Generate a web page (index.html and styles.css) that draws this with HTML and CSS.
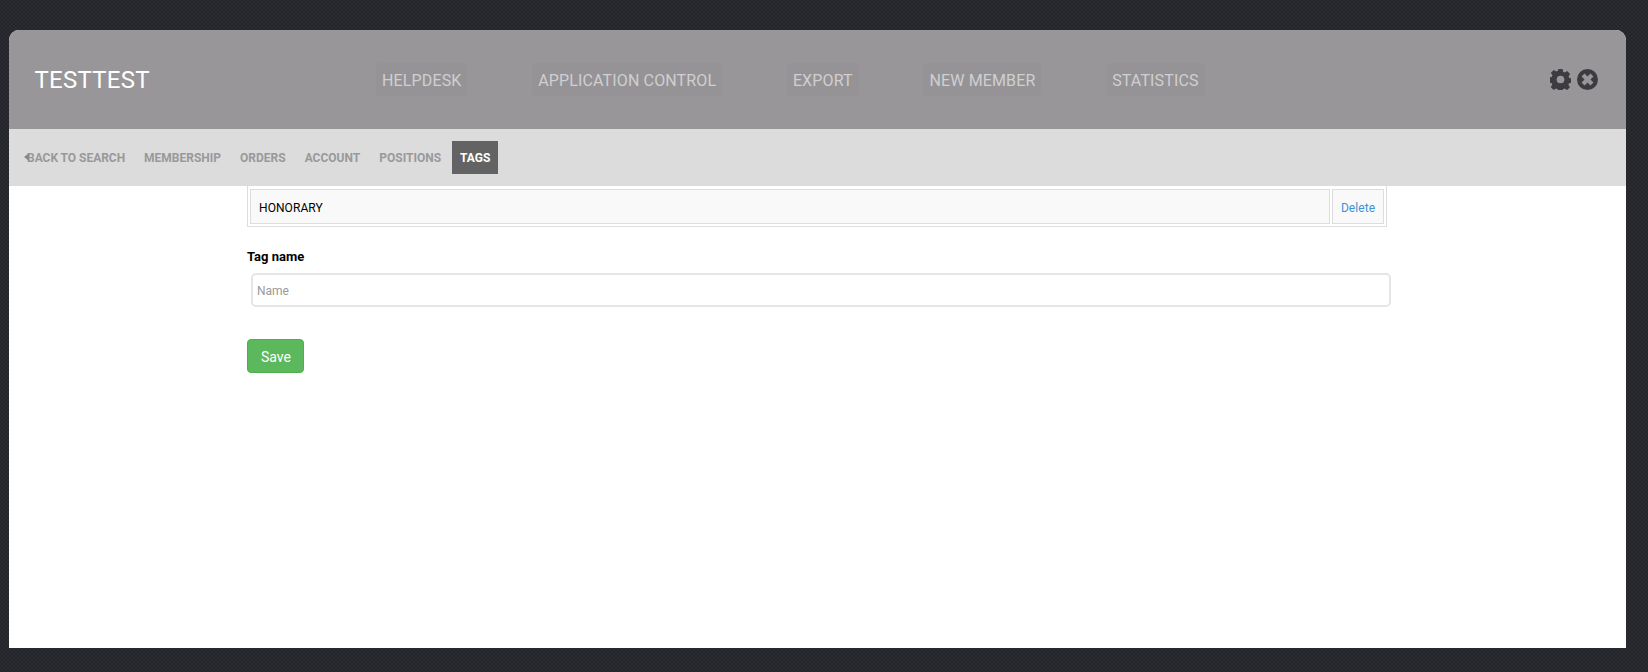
FILE: index.html
```html
<!DOCTYPE html>
<html lang="en">
<head>
<meta charset="utf-8">
<title>TESTTEST</title>
<link rel="stylesheet" href="styles.css">
</head>
<body>
<div class="panel">
  <header class="topbar">
    <div class="brand">TESTTEST</div>
    <nav class="mainnav">
      <a class="mainlink">HELPDESK</a>
      <a class="mainlink">APPLICATION CONTROL</a>
      <a class="mainlink">EXPORT</a>
      <a class="mainlink">NEW MEMBER</a>
      <a class="mainlink">STATISTICS</a>
    </nav>
    <div class="tools">
      <svg class="tool" viewBox="0 0 24 24" width="21" height="21"><path fill-rule="evenodd" d="M9.6 0h4.8l.6 3.2 1.9.8 2.7-1.8 3.4 3.4-1.8 2.7.8 1.9 3 .6v4.8l-3.2.6-.8 1.9 1.8 2.7-3.4 3.4-2.7-1.8-1.9.8-.6 3h-4.8l-.6-3.2-1.9-.8-2.7 1.8-3.4-3.4 1.8-2.7-.8-1.9-3-.6V9.6l3.2-.6.8-1.9-1.8-2.7 3.4-3.4 2.7 1.8 1.9-.8zM12 7.6a4.4 4.4 0 1 0 0 8.8 4.4 4.4 0 0 0 0-8.8z"/></svg>
      <svg class="tool" viewBox="0 0 24 24" width="21" height="21"><path fill-rule="evenodd" d="M12 0a12 12 0 1 1 0 24 12 12 0 0 1 0-24zM8.6 5.2 5.2 8.6 8.6 12l-3.4 3.4 3.4 3.4 3.4-3.4 3.4 3.4 3.4-3.4-3.4-3.4 3.4-3.4-3.4-3.4L12 8.6z"/></svg>
    </div>
  </header>
  <nav class="subnav">
    <a class="sublink back"><span class="caret"></span>BACK TO SEARCH</a>
    <a class="sublink">MEMBERSHIP</a>
    <a class="sublink">ORDERS</a>
    <a class="sublink">ACCOUNT</a>
    <a class="sublink">POSITIONS</a>
    <a class="sublink active">TAGS</a>
  </nav>
  <main class="content">
    <table class="tagtable">
      <tr>
        <td class="tagcell">HONORARY</td>
        <td class="delcell"><a class="del">Delete</a></td>
      </tr>
    </table>
    <label class="fieldlabel" for="tag">Tag name</label>
    <input class="field" id="tag" type="text" placeholder="Name">
    <button class="save" type="button">Save</button>
  </main>
</div>
</body>
</html>
```
FILE: styles.css
```css
* { box-sizing: border-box; }
html, body { height: 100%; }
body {
  margin: 0;
  padding: 30px 22px 24px 9px;
  font-family: Roboto, "Liberation Sans", sans-serif;
  background-color: #222429;
  background-image:
    radial-gradient(circle, rgba(255,255,255,.045) 0 1px, transparent 1px),
    radial-gradient(circle, rgba(255,255,255,.045) 0 1px, transparent 1px);
  background-size: 4px 4px;
  background-position: 0 0, 2px 2px;
}
.panel {
  height: 618px;
  background: #fff;
  border-radius: 10px 10px 0 0;
  overflow: hidden;
}
.topbar {
  height: 99px;
  background: #999699;
  display: flex;
  align-items: center;
  padding: 0 26px 0 25.5px;
}
.brand {
  width: 341.5px;
  color: #fff;
  font-size: 24px;
  line-height: 28px;
  letter-spacing: .25px;
}
.mainnav {
  display: flex;
  gap: 64.7px;
  flex: 1;
}
.mainlink {
  height: 33px;
  line-height: 35px;
  padding: 0 6px;
  font-size: 16px;
  letter-spacing: .14px;
  color: #d0cfd1;
  background: #969396;
  border-radius: 4px;
}
.tools {
  display: flex;
  gap: 6px;
  margin: -1px 2px 0 0;
}
.tool { fill: #3c3c40; display: block; }
.subnav {
  height: 57px;
  background: #dcdcdc;
  display: flex;
  align-items: center;
  padding: 0 8px;
}
.sublink {
  height: 33px;
  line-height: 35px;
  padding: 0 8px;
  margin-right: 3px;
  font-size: 12px;
  font-weight: 700;
  color: #999;
}
.back {
  position: relative;
  padding-left: 10px;
  letter-spacing: -.03px;
}
.caret {
  position: absolute;
  left: 7px;
  top: 12px;
  border-style: solid;
  border-width: 4px 5px 4px 0;
  border-color: transparent #888 transparent transparent;
}
.active {
  background: #636363;
  color: #fff;
  margin-right: 0;
  width: 46px;
}
.content {
  padding: 0 0 0 238px;
}
.tagtable {
  width: 1140px;
  border: 1px solid #ddd;
  border-top: 0;
  border-collapse: separate;
  border-spacing: 2px;
  font-size: 12px;
  margin-bottom: 20px;
  padding-top: 1px;
}
.tagtable td {
  height: 35px;
  line-height: 16px;
  border: 1px solid #ddd;
  background: #f9f9f9;
  padding: 2px 8px 0;
}
.tagcell { color: #000; letter-spacing: .08px; }
.delcell { width: 52px; text-align: center; }
.tagtable .delcell { padding: 2px 0 0; }
.del { color: #3a94d6; letter-spacing: .05px; }
.fieldlabel {
  display: block;
  font-size: 13px;
  font-weight: 700;
  color: #000;
  line-height: 20px;
  margin-bottom: 6px;
}
.field {
  display: block;
  width: 1140px;
  height: 34px;
  margin: 0 0 32px 4px;
  padding: 2px 4px 0;
  border: 2px solid #e5e5e5;
  border-radius: 5px;
  font: 12px Roboto, "Liberation Sans", sans-serif;
  color: #333;
  background: #fff;
}
.field::placeholder { color: #999; opacity: 1; }
.save {
  display: block;
  width: 57px;
  height: 34px;
  padding: 2px 0 0 1px;
  background: #5cb85c;
  border: 1px solid #4cae4c;
  border-radius: 4px;
  color: #fff;
  font: 14px Roboto, "Liberation Sans", sans-serif;
}
```
